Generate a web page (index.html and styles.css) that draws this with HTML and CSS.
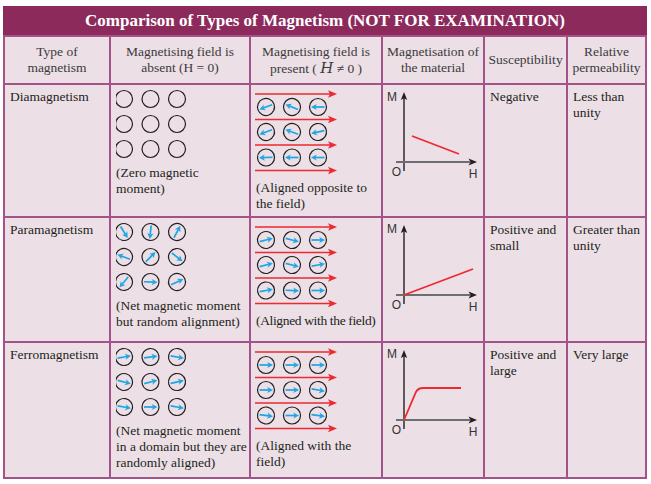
FILE: index.html
```html
<!DOCTYPE html>
<html>
<head>
<meta charset="utf-8">
<link rel="stylesheet" href="styles.css">
</head>
<body>
<div class="page">
  <div class="tbl">
    <div class="title">Comparison of Types of Magnetism (NOT FOR EXAMINATION)</div>

    <div class="th"><span>Type of<br>magnetism</span></div>
    <div class="th"><span>Magnetising field is<br>absent (H = 0)</span></div>
    <div class="th"><span>Magnetising field is<br>present ( <i class="hv">H</i> ≠ 0 )</span></div>
    <div class="th"><span>Magnetisation of<br>the material</span></div>
    <div class="th"><span>Susceptibility</span></div>
    <div class="th"><span>Relative<br>permeability</span></div>

    <!-- Diamagnetism -->
    <div class="td">Diamagnetism</div>
    <div class="td">
      <svg class="dots" width="80" height="76" viewBox="0 0 80 76">
        <use href="#c" x="8" y="10"/><use href="#c" x="34.5" y="10"/><use href="#c" x="61" y="10"/>
        <use href="#c" x="8" y="35"/><use href="#c" x="34.5" y="35"/><use href="#c" x="61" y="35"/>
        <use href="#c" x="8" y="60"/><use href="#c" x="34.5" y="60"/><use href="#c" x="61" y="60"/>
      </svg>
      <p class="note">(Zero magnetic<br>moment)</p>
    </div>
    <div class="td">
      <svg class="field" width="84" height="91" viewBox="0 0 84 91">
        <use href="#f" transform="translate(0 5)"/><use href="#f" transform="translate(0 30.5)"/>
        <use href="#f" transform="translate(0 56)"/><use href="#f" transform="translate(0 81.5)"/>
        <use href="#a" transform="translate(11 18) rotate(160)"/><use href="#a" transform="translate(37 18) rotate(202)"/><use href="#a" transform="translate(63 18) rotate(180)"/>
        <use href="#a" transform="translate(11 43) rotate(160)"/><use href="#a" transform="translate(37 43) rotate(200)"/><use href="#a" transform="translate(63 43) rotate(168)"/>
        <use href="#a" transform="translate(11 68.5) rotate(178)"/><use href="#a" transform="translate(37 68.5) rotate(180)"/><use href="#a" transform="translate(63 68.5) rotate(180)"/>
      </svg>
      <p class="note">(Aligned opposite to<br>the field)</p>
    </div>
    <div class="td">
      <svg class="graph" width="96" height="92" viewBox="0 0 96 92">
        <line x1="17" y1="82" x2="17" y2="8" class="vax"/>
        <path d="M17 3L13.8 11L17 9.2L20.2 11Z" class="head"/>
        <line x1="9" y1="73" x2="83" y2="73" class="hax"/>
        <path d="M90 73L81.5 69.6L83.5 73L81.5 76.4Z" class="head"/>
        <text x="5" y="12" class="lbl">M</text>
        <text x="9.5" y="87" class="lbl">O</text>
        <text x="86" y="89" class="lbl">H</text>
        <line x1="25" y1="47" x2="72" y2="65" class="curve"/>
      </svg>
    </div>
    <div class="td">Negative</div>
    <div class="td">Less than<br>unity</div>

    <!-- Paramagnetism -->
    <div class="td">Paramagnetism</div>
    <div class="td">
      <svg class="dots" width="80" height="76" viewBox="0 0 80 76">
        <use href="#a" transform="translate(8 10) rotate(58)"/><use href="#a" transform="translate(34.5 10) rotate(96)"/><use href="#a" transform="translate(61 10) rotate(-62)"/>
        <use href="#a" transform="translate(8 35) rotate(200)"/><use href="#a" transform="translate(34.5 35) rotate(-45)"/><use href="#a" transform="translate(61 35) rotate(38)"/>
        <use href="#a" transform="translate(8 60) rotate(130)"/><use href="#a" transform="translate(34.5 60) rotate(2)"/><use href="#a" transform="translate(61 60) rotate(-25)"/>
      </svg>
      <p class="note">(Net magnetic moment<br>but random alignment)</p>
    </div>
    <div class="td">
      <svg class="field" width="84" height="91" viewBox="0 0 84 91">
        <use href="#f" transform="translate(0 5)"/><use href="#f" transform="translate(0 30.5)"/>
        <use href="#f" transform="translate(0 56)"/><use href="#f" transform="translate(0 81.5)"/>
        <use href="#a" transform="translate(11 18) rotate(-14)"/><use href="#a" transform="translate(37 18) rotate(15)"/><use href="#a" transform="translate(63 18) rotate(0)"/>
        <use href="#a" transform="translate(11 43) rotate(-14)"/><use href="#a" transform="translate(37 43) rotate(15)"/><use href="#a" transform="translate(63 43) rotate(-10)"/>
        <use href="#a" transform="translate(11 68.5) rotate(-10)"/><use href="#a" transform="translate(37 68.5) rotate(2)"/><use href="#a" transform="translate(63 68.5) rotate(0)"/>
      </svg>
      <p class="note tight">(Aligned with the field)</p>
    </div>
    <div class="td">
      <svg class="graph" width="96" height="92" viewBox="0 0 96 92">
        <line x1="17" y1="82" x2="17" y2="8" class="vax"/>
        <path d="M17 3L13.8 11L17 9.2L20.2 11Z" class="head"/>
        <line x1="9" y1="73" x2="83" y2="73" class="hax"/>
        <path d="M90 73L81.5 69.6L83.5 73L81.5 76.4Z" class="head"/>
        <text x="5" y="11" class="lbl">M</text>
        <text x="9.5" y="87" class="lbl">O</text>
        <text x="86" y="89" class="lbl">H</text>
        <line x1="17" y1="73" x2="86" y2="47" class="curve"/>
      </svg>
    </div>
    <div class="td">Positive and<br>small</div>
    <div class="td">Greater than<br>unity</div>

    <!-- Ferromagnetism -->
    <div class="td">Ferromagnetism</div>
    <div class="td">
      <svg class="dots" width="80" height="76" viewBox="0 0 80 76">
        <use href="#a" transform="translate(8 10) rotate(-10)"/><use href="#a" transform="translate(34.5 10) rotate(-8)"/><use href="#a" transform="translate(61 10) rotate(10)"/>
        <use href="#a" transform="translate(8 35) rotate(14)"/><use href="#a" transform="translate(34.5 35) rotate(-14)"/><use href="#a" transform="translate(61 35) rotate(-12)"/>
        <use href="#a" transform="translate(8 60) rotate(10)"/><use href="#a" transform="translate(34.5 60) rotate(0)"/><use href="#a" transform="translate(61 60) rotate(10)"/>
      </svg>
      <p class="note">(Net magnetic moment<br>in a domain but they are<br>randomly aligned)</p>
    </div>
    <div class="td">
      <svg class="field" width="84" height="91" viewBox="0 0 84 91">
        <use href="#f" transform="translate(0 5)"/><use href="#f" transform="translate(0 30.5)"/>
        <use href="#f" transform="translate(0 56)"/><use href="#f" transform="translate(0 81.5)"/>
        <use href="#a" transform="translate(11 18) rotate(0)"/><use href="#a" transform="translate(37 18) rotate(0)"/><use href="#a" transform="translate(63 18) rotate(0)"/>
        <use href="#a" transform="translate(11 43) rotate(0)"/><use href="#a" transform="translate(37 43) rotate(0)"/><use href="#a" transform="translate(63 43) rotate(10)"/>
        <use href="#a" transform="translate(11 68.5) rotate(8)"/><use href="#a" transform="translate(37 68.5) rotate(0)"/><use href="#a" transform="translate(63 68.5) rotate(8)"/>
      </svg>
      <p class="note">(Aligned with the<br>field)</p>
    </div>
    <div class="td">
      <svg class="graph" width="96" height="92" viewBox="0 0 96 92">
        <line x1="17" y1="82" x2="17" y2="8" class="vax"/>
        <path d="M17 3L13.8 11L17 9.2L20.2 11Z" class="head"/>
        <line x1="9" y1="73" x2="83" y2="73" class="hax"/>
        <path d="M90 73L81.5 69.6L83.5 73L81.5 76.4Z" class="head"/>
        <text x="5" y="11" class="lbl">M</text>
        <text x="9.5" y="87" class="lbl">O</text>
        <text x="86" y="89" class="lbl">H</text>
        <path d="M17 73L29 45Q31 41 36 41L74 41" class="curve"/>
      </svg>
    </div>
    <div class="td">Positive and<br>large</div>
    <div class="td">Very large</div>
  </div>
</div>

<svg class="defs" width="0" height="0" aria-hidden="true">
  <defs>
    <g id="c"><circle r="8.5" fill="none" stroke="#231f20" stroke-width="1.2"/></g>
    <g id="a">
      <circle r="8.5" fill="none" stroke="#231f20" stroke-width="1.2"/>
      <line x1="-6.5" y1="0" x2="3" y2="0" stroke="#1ba6e4" stroke-width="1.7"/>
      <path d="M7 0L1.2-3.1L2.8 0L1.2 3.1Z" fill="#1ba6e4"/>
    </g>
    <g id="f">
      <line x1="0" y1="0" x2="75" y2="0" stroke="#ec2a30" stroke-width="1.6"/>
      <path d="M82 0L73-3.8L75 0L73 3.8Z" fill="#ec2a30"/>
    </g>
  </defs>
</svg>
</body>
</html>
```

FILE: styles.css
```css
* { box-sizing: border-box; }

body {
  margin: 0;
  background: #ffffff;
  font-family: "Liberation Serif", "Times New Roman", serif;
}

.page {
  padding: 6px 0 0 3px;
}

.tbl {
  display: grid;
  width: 644px;
  grid-template-columns: 104px 138px 130px 100px 81px 77px;
  grid-template-rows: 29px 46px 131px 123px 134px;
  gap: 2px;
  padding: 0 2px 2px;
  background: #a4528a;
}

.title {
  grid-column: 1 / -1;
  margin: 0 -2px;
  background: #8c2a5c;
  color: #ffffff;
  font-weight: bold;
  font-size: 17px;
  display: flex;
  align-items: center;
  justify-content: center;
}

.th {
  background: #ecdfe6;
  color: #3b3b3b;
  font-size: 13.5px;
  line-height: 16px;
  display: flex;
  align-items: center;
  justify-content: center;
  text-align: center;
  white-space: nowrap;
}

.hv {
  font-family: "DejaVu Serif", serif;
  font-size: 15px;
  line-height: 16px;
}

.td {
  background: #ecdfe6;
  color: #231f20;
  font-size: 13.5px;
  line-height: 16px;
  padding: 4px 5px;
  white-space: nowrap;
}

.note {
  margin: 0;
}

.tight {
  letter-spacing: -0.35px;
}

svg {
  display: block;
}

.field {
  margin-left: -1px;
}

.graph {
  margin-left: -1px;
}

.vax {
  stroke: #231f20;
  stroke-width: 1.4;
}

.hax {
  stroke: #6d6e71;
  stroke-width: 2;
}

.head {
  fill: #231f20;
}

.curve {
  fill: none;
  stroke: #ec2a30;
  stroke-width: 1.8;
}

.lbl {
  font-family: "Liberation Sans", Arial, sans-serif;
  font-size: 12px;
  fill: #333333;
  text-anchor: middle;
}

.defs {
  display: block;
  width: 0;
  height: 0;
  overflow: hidden;
}
```
